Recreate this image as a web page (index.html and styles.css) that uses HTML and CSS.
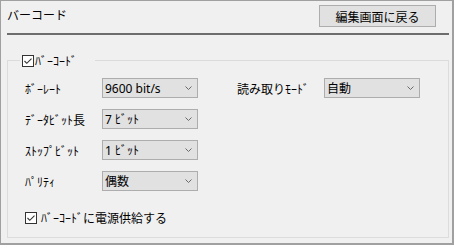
FILE: index.html
```html
<!DOCTYPE html>
<html lang="ja">
<head>
<meta charset="utf-8">
<title>バーコード</title>
<link rel="stylesheet" href="styles.css">
</head>
<body>
<div class="window">
  <header class="top">
    <h1 class="title">バーコード</h1>
    <button class="btn" type="button">編集画面に戻る</button>
  </header>
  <div class="rule"></div>
  <section class="group">
    <div class="legend">
      <span class="check"><svg width="12" height="12" viewBox="0 0 12 12"><path d="M2.5 6 L4.8 8.3 L9.5 3.6" fill="none" stroke="#333" stroke-width="1.1"/></svg></span>
      <span class="legend-text">ﾊﾞｰｺｰﾄﾞ</span>
    </div>
    <div class="grid">
      <span class="lbl">ﾎﾞｰﾚｰﾄ</span>
      <div class="combo"><span>9600 bit/s</span><svg class="chev" width="7" height="4" viewBox="0 0 7 4"><polyline points="0.5,0.5 3.5,3.5 6.5,0.5" fill="none" stroke="#6a6a6a" stroke-width="1"/></svg></div>
      <span class="lbl lbl-r">読み取りﾓｰﾄﾞ</span>
      <div class="combo combo-r"><span>自動</span><svg class="chev" width="7" height="4" viewBox="0 0 7 4"><polyline points="0.5,0.5 3.5,3.5 6.5,0.5" fill="none" stroke="#6a6a6a" stroke-width="1"/></svg></div>

      <span class="lbl">ﾃﾞｰﾀﾋﾞｯﾄ長</span>
      <div class="combo"><span>7 ﾋﾞｯﾄ</span><svg class="chev" width="7" height="4" viewBox="0 0 7 4"><polyline points="0.5,0.5 3.5,3.5 6.5,0.5" fill="none" stroke="#6a6a6a" stroke-width="1"/></svg></div>

      <span class="lbl">ｽﾄｯﾌﾟﾋﾞｯﾄ</span>
      <div class="combo"><span>1 ﾋﾞｯﾄ</span><svg class="chev" width="7" height="4" viewBox="0 0 7 4"><polyline points="0.5,0.5 3.5,3.5 6.5,0.5" fill="none" stroke="#6a6a6a" stroke-width="1"/></svg></div>

      <span class="lbl">ﾊﾟﾘﾃｨ</span>
      <div class="combo"><span>偶数</span><svg class="chev" width="7" height="4" viewBox="0 0 7 4"><polyline points="0.5,0.5 3.5,3.5 6.5,0.5" fill="none" stroke="#6a6a6a" stroke-width="1"/></svg></div>
    </div>
    <div class="power">
      <span class="check"><svg width="12" height="12" viewBox="0 0 12 12"><path d="M2.5 6 L4.8 8.3 L9.5 3.6" fill="none" stroke="#333" stroke-width="1.1"/></svg></span>
      <span class="power-text">ﾊﾞｰｺｰﾄﾞに電源供給する</span>
    </div>
  </section>
</div>
</body>
</html>
```

FILE: styles.css
```css
* { box-sizing: border-box; }

html, body {
  margin: 0;
  padding: 0;
  background: #f0f0f0;
}

body {
  font-family: "Noto Sans", "Noto Sans CJK JP", sans-serif;
  font-size: 12px;
  line-height: 15px;
  color: #000;
}

.window {
  width: 454px;
  height: 245px;
  border-style: solid;
  border-color: #a0a0a0;
  border-width: 1px 2px 2px 1px;
  background: #f0f0f0;
  padding: 4px 3px 0 6px;
}

.top {
  display: flex;
  justify-content: space-between;
  align-items: flex-start;
  height: 22px;
}

.title {
  margin: 2px 0 0 0;
  font-size: 12px;
  font-weight: normal;
  line-height: 15px;
  font-family: "Noto Sans CJK JP", sans-serif;
}

.btn {
  width: 117px;
  height: 22px;
  margin: 0 13px 0 0;
  padding: 0;
  background: #e1e1e1;
  border: 1px solid #adadad;
  font-family: "Noto Sans CJK JP", sans-serif;
  font-size: 12px;
  line-height: 15px;
  color: #000;
}

.rule {
  height: 2px;
  margin-top: 6px;
  background: #6d6d6d;
}

.group {
  position: relative;
  margin-top: 25px;
  height: 178px;
  border: 1px solid #dcdcdc;
  padding: 17px 0 0 17px;
}

.legend {
  position: absolute;
  top: -8px;
  left: 12px;
  width: 75px;
  height: 15px;
  background: #f0f0f0;
  padding-left: 2px;
  display: flex;
  align-items: center;
  gap: 1px;
  font-family: "Noto Sans CJK JP", sans-serif;
}

.check {
  display: inline-block;
  width: 12px;
  height: 12px;
  border: 1px solid #333;
  background: #fff;
  flex: none;
  position: relative;
}

.check svg {
  position: absolute;
  left: -1px;
  top: -1px;
}

.grid {
  display: grid;
  grid-template-columns: 77px 96px 39px 87px 96px;
  grid-auto-rows: 20px;
  row-gap: 11px;
  align-items: center;
}

.lbl {
  grid-column: 1;
  font-family: "Noto Sans CJK JP", sans-serif;
}

.lbl-r { grid-column: 4; }

.combo {
  grid-column: 2;
  height: 20px;
  border: 1px solid #adadad;
  background: #e1e1e1;
  display: flex;
  align-items: center;
  justify-content: space-between;
  padding: 0 5px 0 2px;
  font-family: "Noto Sans", "Noto Sans CJK JP", sans-serif;
}

.combo-r { grid-column: 5; }

.chev { flex: none; }

.power {
  display: flex;
  align-items: center;
  gap: 4px;
  margin-top: 19px;
  height: 15px;
  font-family: "Noto Sans CJK JP", sans-serif;
}
```
